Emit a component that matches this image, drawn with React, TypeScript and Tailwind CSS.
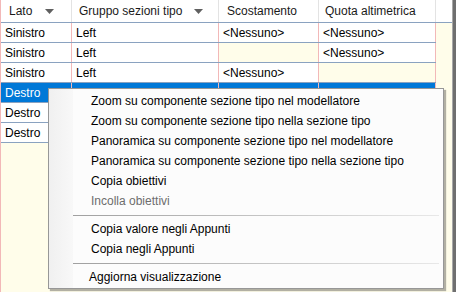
import React from "react"

const font = { fontFamily: '"Liberation Sans", Arial, sans-serif' }

type Row = { lato: string; gruppo: string; scost: string; quota: string; sel?: boolean }

const rows: Row[] = [
  { lato: "Sinistro", gruppo: "Left", scost: "<Nessuno>", quota: "<Nessuno>" },
  { lato: "Sinistro", gruppo: "Left", scost: "", quota: "<Nessuno>" },
  { lato: "Sinistro", gruppo: "Left", scost: "<Nessuno>", quota: "" },
  { lato: "Destro", gruppo: "", scost: "", quota: "", sel: true },
  { lato: "Destro", gruppo: "", scost: "", quota: "" },
  { lato: "Destro", gruppo: "", scost: "", quota: "" },
]

function Arrow() {
  return (
    <svg width="9" height="5" viewBox="0 0 9 5" className="shrink-0">
      <path d="M0 0 H9 L4.5 5 Z" fill="#606060" />
    </svg>
  )
}

function Cell({ w, text, sel, empty }: { w: string; text: string; sel?: boolean; empty?: boolean }) {
  return (
    <div
      className={`${w} h-full flex items-center pl-[4px] border-r border-[#f2b8b8] whitespace-nowrap overflow-hidden ${
        sel ? "bg-[#0078d7] text-white" : empty ? "bg-[#fffdea]" : "bg-white text-black"
      }`}
    >
      {text}
    </div>
  )
}

function Item({ label, disabled, pl = "pl-[40px]" }: { label: string; disabled?: boolean; pl?: string }) {
  return (
    <div className={`h-[20px] flex items-center ${pl} ${disabled ? "text-[#6d6d6d]" : "text-black"}`}>
      {label}
    </div>
  )
}

function Sep() {
  return (
    <div className="h-[8px] flex items-center pl-[22px] pr-[2px]">
      <div className="h-px w-full bg-gradient-to-r from-[#a0a0a0] to-[#e8e8e8]" />
    </div>
  )
}

export default function App() {
  return (
    <div className="relative w-[456px] h-[292px] overflow-hidden bg-[#fffdea] text-[12px] leading-none" style={font}>
      <div className="flex h-full">
        <div className="flex flex-col w-[452px] border-l border-[#f2b8b8]">
          <div className="flex h-[23px] bg-white border-b border-[#8aa2c0] text-[#1a1a1a]">
            <div className="w-[71px] flex items-center pl-[8px] pr-[17px] justify-between border-r border-[#e3e3e3]">
              <span>Lato</span>
              <Arrow />
            </div>
            <div className="w-[147px] flex items-center pl-[7px] pr-[15px] justify-between border-r border-[#e3e3e3]">
              <span>Gruppo sezioni tipo</span>
              <Arrow />
            </div>
            <div className="w-[100px] flex items-center pl-[8px] border-r border-[#e3e3e3]">Scostamento</div>
            <div className="w-[117px] flex items-center pl-[6px] border-r border-[#e3e3e3]">Quota altimetrica</div>
            <div className="flex-1" />
          </div>
          {rows.map((r, i) => (
            <div key={i} className="flex h-[20px] w-[435px] border-b border-[#8aa2c0]">
              <Cell w="w-[71px]" text={r.lato} sel={r.sel} />
              <Cell w="w-[147px]" text={r.gruppo} sel={r.sel} />
              <Cell w="w-[100px]" text={r.scost} sel={r.sel} empty={!r.scost} />
              <Cell w="w-[117px]" text={r.quota} sel={r.sel} empty={!r.quota} />
            </div>
          ))}
          <div className="flex-1" />
        </div>
        <div className="w-[4px] h-full bg-[#6f6f6f] border-l border-[#a8a8a8]" />
      </div>

      <div className="absolute left-[48px] top-[88px] w-[396px] h-[201px] bg-[#fcfcfc] border border-[#979797] shadow-[2px_2px_1px_rgba(0,0,0,0.3)] p-[2px]">
        <div className="absolute left-0 top-0 bottom-0 w-[24px] bg-gradient-to-r from-[#f0f0f0] to-[#f8f8f8]" />
        <div className="relative">
          <Item label="Zoom su componente sezione tipo nel modellatore" />
          <Item label="Zoom su componente sezione tipo nella sezione tipo" />
          <Item label="Panoramica su componente sezione tipo nel modellatore" />
          <Item label="Panoramica su componente sezione tipo nella sezione tipo" />
          <Item label="Copia obiettivi" />
          <Item label="Incolla obiettivi" disabled />
          <Sep />
          <Item label="Copia valore negli Appunti" />
          <Item label="Copia negli Appunti" />
          <Sep />
          <Item label="Aggiorna visualizzazione" pl="pl-[38px]" />
        </div>
      </div>
    </div>
  )
}
